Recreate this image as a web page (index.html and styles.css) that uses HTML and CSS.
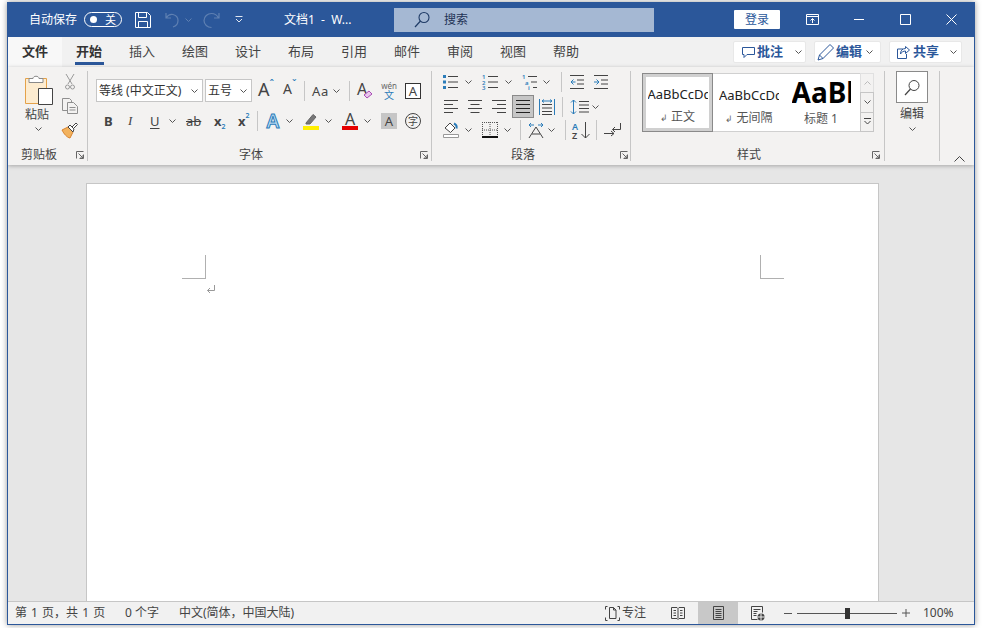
FILE: index.html
```html
<!DOCTYPE html>
<html lang="zh-CN">
<head>
<meta charset="utf-8">
<title>文档1 - Word</title>
<link rel="stylesheet" href="styles.css">
</head>
<body>
<svg class="defs" width="0" height="0">
  <symbol id="chev" viewBox="0 0 7 4"><path d="M.5.5l3 3 3-3" fill="none" stroke="#555" stroke-width="1"/></symbol>
  <symbol id="launch" viewBox="0 0 8 8"><path d="M.5 7.5v-7h7M7.5 3.5v4h-4M2.5 2.5l4.5 4.5M4 7h3V4" fill="none" stroke="#666" stroke-width="1"/></symbol>
</svg>
<div class="window">
  <header class="titlebar">
    <span class="autosave">自动保存</span>
    <span class="toggle ml7"><i class="dot"></i><b class="toggle-t">关</b></span>
    <svg class="ml13" width="16" height="16" viewBox="0 0 16 16"><path d="M.5.5h12l3 3v12H.5zM3.5 .5v5h8v-5M3.5 15.5v-6h9v6" fill="none" stroke="#fff"/></svg>
    <svg class="ml14" width="15" height="16" viewBox="0 0 15 16"><path d="M1 1v5h5M1 6c2-3 5-4 7-3.500 3 .7 5 3 5 6 0 3-2 5.500-5 6.500" fill="none" stroke="#5f80b2" stroke-width="1.200"/></svg>
    <svg class="ml5" width="7" height="4" viewBox="0 0 7 4"><path d="M.5.5l3 3 3-3" fill="none" stroke="#5f80b2"/></svg>
    <svg class="ml11" width="17" height="16" viewBox="0 0 17 16"><path d="M16 1v5h-5M15.500 6C14 3 11.500 1.500 8.500 1.500 4.500 1.500 1 4.500 1 8.500s3.500 7 7.500 7" fill="none" stroke="#5f80b2" stroke-width="1.200"/></svg>
    <svg class="ml15" width="8" height="7" viewBox="0 0 8 7"><path d="M.5.500h7M1 3l3 3 3-3" fill="none" stroke="#dfe6f1"/></svg>
    <span class="doctitle ml41">文档1&nbsp; -&nbsp; W...</span>
    <div class="search ml36">
      <svg width="16" height="17" viewBox="0 0 16 17"><circle cx="10" cy="6.500" r="5" fill="none" stroke="#1f3b66" stroke-width="1.100"/><path d="M6.500 10L1 16" stroke="#1f3b66" stroke-width="1.200"/></svg>
      <span class="search-t">搜索</span>
    </div>
    <button class="login ml80">登录</button>
    <svg class="ml26" width="13" height="11" viewBox="0 0 13 11"><path d="M.5.500h12v10H.5zM.5 2.500h12M6.500 9V4.500M4.500 6.500l2-2 2 2" fill="none" stroke="#fff"/></svg>
    <svg class="ml35" width="10" height="1" viewBox="0 0 10 1"><path d="M0 .5h10" stroke="#fff"/></svg>
    <svg class="ml36" width="11" height="11" viewBox="0 0 11 11"><path d="M.5.500h10v10H.5z" fill="none" stroke="#fff"/></svg>
    <svg class="ml35" width="11" height="11" viewBox="0 0 11 11"><path d="M.5.500l10 10M10.500.5l-10 10" fill="none" stroke="#fff"/></svg>
  </header>

  <nav class="tabbar">
    <span class="file">文件</span>
    <span class="tab tab-on ml14">开始</span>
    <span class="tab ml27">插入</span>
    <span class="tab ml27">绘图</span>
    <span class="tab ml27">设计</span>
    <span class="tab ml27">布局</span>
    <span class="tab ml27">引用</span>
    <span class="tab ml27">邮件</span>
    <span class="tab ml27">审阅</span>
    <span class="tab ml27">视图</span>
    <span class="tab ml27">帮助</span>
    <div class="actions">
      <div class="action w73 pl8">
        <svg width="13" height="12" viewBox="0 0 13 12"><path d="M.5 1.500h12v7H5l-3 3v-3H.5z" fill="none" stroke="#2b579a"/></svg>
        <b class="action-t ml2">批注</b>
        <svg class="ml12" width="7" height="4"><use href="#chev"/></svg>
      </div>
      <div class="action w67 pl2">
        <svg width="18" height="18" viewBox="0 0 18 18"><path d="M1 17l1.500-5L13 1.500l3.500 3.500L6 15.500zM2.500 12L6 15.500" fill="none" stroke="#2b579a"/></svg>
        <b class="action-t ml1">编辑</b>
        <svg class="ml4" width="7" height="4"><use href="#chev"/></svg>
      </div>
      <div class="action w73 pl7">
        <svg width="13" height="13" viewBox="0 0 13 13"><path d="M6 3H.5v9.500h9V8M12.500 4L8.500.5v2C5 2.500 3.500 5 3.500 8c1-2 3-3 5-3v2.500z" fill="none" stroke="#2b579a"/></svg>
        <b class="action-t ml3">共享</b>
        <svg class="ml11" width="7" height="4"><use href="#chev"/></svg>
      </div>
    </div>
  </nav>

  <section class="ribbon">
    <div class="group g-clip">
      <div class="g-body clip-body">
        <div class="paste-col">
          <svg width="28" height="30" viewBox="0 0 28 30"><path d="M.5 3.500h21v25H.5z" fill="#fdecd0" stroke="#e4a24a"/><path d="M4 7.500V3.500h4c0-3 6-3 6 0h4v4z" fill="#fff" stroke="#8a8a8a"/><path d="M13.500 13.500h14v16h-14z" fill="#fff" stroke="#444"/></svg>
          <span class="paste-t">粘贴</span>
          <svg class="paste-ch" width="7" height="4"><use href="#chev"/></svg>
        </div>
        <div class="clip-col">
          <svg width="10" height="16" viewBox="0 0 10 16"><path d="M1 0l6 10M9 0L3 10" fill="none" stroke="#9a9a9a"/><circle cx="2.500" cy="13" r="2" fill="none" stroke="#9a9a9a"/><circle cx="7.500" cy="13" r="2" fill="none" stroke="#9a9a9a"/></svg>
          <svg width="16" height="16" viewBox="0 0 16 16"><path d="M5.500 12.500H.5V.5h7l2 2v2M5.500 4.500h6l4 4v7h-10zM7.500 9.500h6M7.500 12h6" fill="none" stroke="#8f8f8f"/></svg>
          <svg width="17" height="16" viewBox="0 0 17 16"><path d="M1 8l6-3 5 5-3 6c-3-.5-6-4-8-8z" fill="#f2b25e" stroke="#d9822b"/><path d="M7 5l2-2 4 4-1 3zM11 5l4-4 1.500 1.500-4 4" fill="#fff" stroke="#444"/></svg>
        </div>
      </div>
      <div class="g-label">
        <span class="lb ml13 w36">剪贴板</span>
        <svg class="ml19" width="8" height="8"><use href="#launch"/></svg>
      </div>
    </div>

    <div class="group g-font">
      <div class="g-body font-body">
        <div class="row r-font1">
          <div class="select w107"><span class="select-t">等线 (中文正文)</span><svg width="7" height="4"><use href="#chev"/></svg></div>
          <div class="select w47 ml2"><span class="select-t">五号</span><svg width="7" height="4"><use href="#chev"/></svg></div>
          <span class="ico-a a-big ml6">A<sup class="car">ˆ</sup></span>
          <span class="ico-a a-sm ml10">A<sup class="car car-b">ˇ</sup></span>
          <i class="sep ml7"></i>
          <span class="aa ml7">Aa</span>
          <svg class="ml3" width="7" height="4"><use href="#chev"/></svg>
          <i class="sep ml9"></i>
          <svg class="ml7" width="16" height="18" viewBox="0 0 16 18"><text x="0" y="13" class="svgt" font-size="16" fill="#444">A</text><path d="M7 13l5-4 3 3-5 4z" fill="#e7c6ec" stroke="#a94bb5"/></svg>
          <span class="wen ml9"><small class="wen-a">wén</small><span class="wen-b">文</span></span>
          <span class="boxa ml9">A</span>
        </div>
        <div class="row r-font2">
          <b class="fx fx-b ml8">B</b>
          <i class="fx fx-i ml16">I</i>
          <span class="fx fx-u ml16">U</span>
          <svg class="ml10" width="7" height="4"><use href="#chev"/></svg>
          <span class="fx fx-s ml10">ab</span>
          <span class="fx fx-x ml12">x<sub class="blue-s">2</sub></span>
          <span class="fx fx-x ml13">x<sup class="blue-s">2</sup></span>
          <i class="sep ml8"></i>
          <svg class="ml7" width="16" height="17" viewBox="0 0 16 17"><text x="8" y="15" text-anchor="middle" class="svgt svgb" font-size="19" fill="#bfe0f5" stroke="#2b7cb9" stroke-width="1">A</text></svg>
          <svg class="ml5" width="7" height="4"><use href="#chev"/></svg>
          <svg class="ml10" width="16" height="18" viewBox="0 0 16 18"><path d="M3 11L10 2.500l3 2.500-6 7H3z" fill="#777" stroke="#666"/><path d="M0 14h16v4H0z" fill="#ffef00"/></svg>
          <svg class="ml6" width="7" height="4"><use href="#chev"/></svg>
          <svg class="ml10" width="16" height="18" viewBox="0 0 16 18"><text x="8" y="13" text-anchor="middle" class="svgt" font-size="16" fill="#444">A</text><path d="M0 14h16v4H0z" fill="#e60000"/></svg>
          <svg class="ml6" width="7" height="4"><use href="#chev"/></svg>
          <span class="shade ml10">A</span>
          <span class="ringz ml8">字</span>
        </div>
      </div>
      <div class="g-label">
        <span class="lb ml151 w24">字体</span>
        <svg class="ml157" width="8" height="8"><use href="#launch"/></svg>
      </div>
    </div>

    <div class="group g-para">
      <div class="g-body para-body">
        <div class="row r-p1">
          <svg class="ml11" width="15" height="16" viewBox="0 0 15 16"><path d="M0 1h3v3H0zM0 6.500h3v3H0zM0 12h3v3H0z" fill="#2b7cb9"/><path d="M5 2.500h10M5 8h10M5 13.500h10" stroke="#444"/></svg>
          <svg class="ml7" width="7" height="4"><use href="#chev"/></svg>
          <svg class="ml10" width="16" height="16" viewBox="0 0 16 16"><text x="0" y="5" class="svgt svgb" font-size="6" fill="#2b7cb9">1</text><text x="0" y="10.500" class="svgt svgb" font-size="6" fill="#2b7cb9">2</text><text x="0" y="16" class="svgt svgb" font-size="6" fill="#2b7cb9">3</text><path d="M6 2.500h10M6 8h10M6 13.500h10" stroke="#444"/></svg>
          <svg class="ml7" width="7" height="4"><use href="#chev"/></svg>
          <svg class="ml10" width="16" height="16" viewBox="0 0 16 16"><text x="0" y="5" class="svgt svgb" font-size="6" fill="#2b7cb9">1</text><text x="3" y="10.500" class="svgt svgb" font-size="6" fill="#2b7cb9">a</text><text x="6" y="16" class="svgt svgb" font-size="6" fill="#2b7cb9">i</text><path d="M6 2.500h9M9 8h6M11 13.500h4" stroke="#444"/></svg>
          <svg class="ml5" width="7" height="4"><use href="#chev"/></svg>
          <i class="sep ml11"></i>
          <svg class="ml8" width="14" height="14" viewBox="0 0 14 14"><path d="M0 .5h14M7 5h7M7 9h7M0 13.500h14" stroke="#444"/><path d="M5.500 7H1M3.500 4.500L1 7l2.500 2.500" fill="none" stroke="#2b7cb9"/></svg>
          <svg class="ml10" width="14" height="14" viewBox="0 0 14 14"><path d="M0 .5h14M7 5h7M7 9h7M0 13.500h14" stroke="#444"/><path d="M0 7h4.500M2.500 4.500L5 7 2.500 9.500" fill="none" stroke="#2b7cb9"/></svg>
        </div>
        <div class="row r-p2">
          <svg class="ml12" width="14" height="13" viewBox="0 0 14 13"><path d="M0 .5h14M0 4.500h9M0 8.500h14M0 12.500h9" stroke="#444"/></svg>
          <svg class="ml10" width="14" height="13" viewBox="0 0 14 13"><path d="M0 .5h14M2.500 4.500h9M0 8.500h14M2.500 12.500h9" stroke="#444"/></svg>
          <svg class="ml10" width="14" height="13" viewBox="0 0 14 13"><path d="M0 .5h14M5 4.500h9M0 8.500h14M5 12.500h9" stroke="#444"/></svg>
          <span class="just ml6"><svg width="14" height="13" viewBox="0 0 14 13"><path d="M0 .5h14M0 4.500h14M0 8.500h14M0 12.500h14" stroke="#222"/></svg></span>
          <svg class="ml5" width="16" height="16" viewBox="0 0 16 16"><path d="M.5 0v16M15.500 0v16" stroke="#2b7cb9"/><path d="M3 5.500h10M3 9h10M3 12.500h10M3 15.500h10" stroke="#444"/><path d="M3 2h10M5 .5L3 2l2 1.500M11 .5L13 2l-2 1.500" fill="none" stroke="#2b7cb9"/></svg>
          <i class="sep ml7"></i>
          <svg class="ml7" width="19" height="16" viewBox="0 0 19 16"><path d="M3.500 1v14M1 3.500L3.500 1 6 3.500M1 12.500L3.500 15 6 12.500" fill="none" stroke="#2b7cb9"/><path d="M9 2.500h10M9 6h10M9 9.500h10M9 13h10" stroke="#444"/></svg>
          <svg class="ml3" width="7" height="4"><use href="#chev"/></svg>
        </div>
        <div class="row r-p3">
          <svg class="ml11" width="16" height="16" viewBox="0 0 16 16"><path d="M2 6l5-5 5 5-4.500 4.500z" fill="#fff" stroke="#444"/><path d="M11 1.500c2 1 3 3 2.500 5" fill="none" stroke="#2b7cb9" stroke-width="2"/><path d="M.5 12.500h15v3H.5z" fill="#fff" stroke="#999"/></svg>
          <svg class="ml6" width="7" height="4"><use href="#chev"/></svg>
          <svg class="ml10" width="16" height="16" viewBox="0 0 16 16"><path d="M.5 0v15M15.500 0v15M0 .5h16M8 0v15M0 8h16" stroke="#555" stroke-dasharray="1 1" fill="none"/><path d="M0 15h16" stroke="#111" stroke-width="2"/></svg>
          <svg class="ml6" width="7" height="4"><use href="#chev"/></svg>
          <i class="sep ml9"></i>
          <svg class="ml7" width="16" height="16" viewBox="0 0 16 16"><path d="M1 3h5M3 1L1 3l2 2M10 3h5M13 1l2 2-2 2" fill="none" stroke="#2b7cb9"/><path d="M1 16L8 5l7 11M4 12h8" fill="none" stroke="#444"/></svg>
          <svg class="ml4" width="7" height="4"><use href="#chev"/></svg>
          <i class="sep ml10"></i>
          <svg class="ml6" width="18" height="17" viewBox="0 0 18 17"><text x="0" y="7.500" class="svgt svgb" font-size="9" fill="#2b7cb9">A</text><text x="0" y="16.500" class="svgt svgb" font-size="9" fill="#444">Z</text><path d="M13.500 0v16M9.500 12l4 4 4-4" fill="none" stroke="#444"/></svg>
          <i class="sep ml6"></i>
          <svg class="ml7" width="17" height="14" viewBox="0 0 17 14"><path d="M16.500 0v6.500h-8M11 4L8.500 6.500 11 9" fill="none" stroke="#444"/><path d="M0 10.500h10M7 8l3 2.500L7 13" fill="none" stroke="#444"/></svg>
        </div>
      </div>
      <div class="g-label">
        <span class="lb ml79 w24">段落</span>
        <svg class="ml85" width="8" height="8"><use href="#launch"/></svg>
      </div>
    </div>

    <div class="group g-style">
      <div class="g-body style-body">
        <div class="gallery">
          <div class="st st-on"><span class="st-a">AaBbCcDdEe</span><span class="st-n"><i class="ret">↲</i> 正文</span></div>
          <div class="st"><span class="st-a">AaBbCcDdEe</span><span class="st-n"><i class="ret">↲</i> 无间隔</span></div>
          <div class="st"><span class="st-h">AaBbC</span><span class="st-n">标题 1</span></div>
        </div>
        <div class="scroll">
          <span class="sc sc-off"><svg width="7" height="4" viewBox="0 0 7 4"><path d="M.5 3.500l3-3 3 3" fill="none" stroke="#bbb"/></svg></span>
          <span class="sc"><svg width="7" height="4"><use href="#chev"/></svg></span>
          <span class="sc"><svg width="7" height="7" viewBox="0 0 7 7"><path d="M0 .5h7M.5 3l3 3 3-3" fill="none" stroke="#444"/></svg></span>
        </div>
      </div>
      <div class="g-label">
        <span class="lb ml106 w24">样式</span>
        <svg class="ml111" width="8" height="8"><use href="#launch"/></svg>
      </div>
    </div>

    <div class="group g-edit">
      <div class="edit-col">
        <span class="find"><svg width="16" height="17" viewBox="0 0 16 17"><circle cx="10" cy="6.500" r="5" fill="none" stroke="#444"/><path d="M6.500 10L1 16" stroke="#444" stroke-width="1.200"/></svg></span>
        <span class="edit-t">编辑</span>
        <svg class="edit-ch" width="7" height="4"><use href="#chev"/></svg>
      </div>
    </div>
    <div class="collapse"><svg width="11" height="6" viewBox="0 0 11 6"><path d="M.5 5.500l5-5 5 5" fill="none" stroke="#444"/></svg></div>
  </section>

  <main class="docarea">
    <article class="page">
      <div class="crops"><i class="crop crop-l"></i><i class="crop crop-r"></i></div>
      <div class="para-mark"><svg width="9" height="9" viewBox="0 0 9 9"><path d="M8.500 0v5.500H1.500M4 3L1.500 5.500 4 8" fill="none" stroke="#999"/></svg></div>
    </article>
  </main>

  <footer class="status">
    <span class="s-page">第 1 页，共 1 页</span>
    <span class="s-words">0 个字</span>
    <span class="s-lang">中文(简体，中国大陆)</span>
    <svg class="s-focus" width="15" height="15" viewBox="0 0 15 15"><path d="M.5 3.500v-3h2M.5 11.500v3h2M14.500 3.500v-3h-2M14.500 11.500v3h-2M4.500 12.500v-11h4l2.500 2.500v8.500zM8.500 1.500V4H11" fill="none" stroke="#444"/></svg>
    <span class="s-ft">专注</span>
    <svg class="ml25" width="14" height="14" viewBox="0 0 14 14"><path d="M.5 1.500h5.500l1 1 1-1h5.500v11H8l-1 1-1-1H.500zM7 2.500v10M2.500 4.500h2.500M2.500 7h2.500M2.500 9.500h2.500M9 4.500h2.500M9 7h2.500M9 9.500h2.500" fill="none" stroke="#444"/></svg>
    <span class="s-print ml13"><svg width="11" height="14" viewBox="0 0 11 14"><path d="M.5.500h10v13H.5zM2.500 3.500h6M2.500 5.500h6M2.500 7.500h6M2.500 9.500h6M2.500 11.500h6" fill="none" stroke="#444"/></svg></span>
    <svg class="ml13" width="14" height="15" viewBox="0 0 14 15"><path d="M6.500 13.500H.5V.5h11v6M2.500 3.500h7M2.500 5.500h4M2.500 7.500h3M2.500 9.500h3" fill="none" stroke="#444"/><circle cx="10" cy="11" r="3.500" fill="#444"/><path d="M6.500 11h7M10 7.500v7" stroke="#eee"/></svg>
    <svg class="ml19" width="8" height="1" viewBox="0 0 8 1"><path d="M0 .5h8" stroke="#555"/></svg>
    <span class="slider ml5"><i class="thumb"></i></span>
    <svg class="ml5" width="8" height="8" viewBox="0 0 8 8"><path d="M0 4h8M4 0v8" stroke="#555"/></svg>
    <span class="s-zoom ml13">100%</span>
  </footer>
</div>
</body>
</html>
```
FILE: styles.css
```css
* { box-sizing: border-box; }
html, body { margin: 0; height: 100%; overflow: hidden; }
body {
  background: #fff;
  font-family: "Noto Sans", "Noto Sans CJK SC", sans-serif;
  font-size: 12px;
  color: #444;
}
.defs { position: absolute; }
svg { display: block; flex: none; overflow: visible; }
i { font-style: normal; }
.svgt { font-family: "Noto Sans", sans-serif; }
.svgb { font-weight: 600; }

.ml1 { margin-left: 1px; } .ml2 { margin-left: 2px; } .ml3 { margin-left: 3px; } .ml4 { margin-left: 4px; } .ml5 { margin-left: 5px; }
.ml6 { margin-left: 6px; } .ml7 { margin-left: 7px; } .ml8 { margin-left: 8px; } .ml9 { margin-left: 9px; }
.ml10 { margin-left: 10px; } .ml11 { margin-left: 11px; } .ml12 { margin-left: 12px; } .ml13 { margin-left: 13px; }
.ml14 { margin-left: 14px; } .ml15 { margin-left: 15px; } .ml16 { margin-left: 16px; } .ml19 { margin-left: 19px; }
.ml25 { margin-left: 25px; } .ml26 { margin-left: 26px; } .ml27 { margin-left: 27px; }
.ml35 { margin-left: 35px; } .ml36 { margin-left: 36px; } .ml41 { margin-left: 41px; } .ml79 { margin-left: 79px; }
.ml80 { margin-left: 80px; } .ml85 { margin-left: 85px; } .ml106 { margin-left: 106px; } .ml111 { margin-left: 111px; }
.ml151 { margin-left: 151px; } .ml157 { margin-left: 157px; }
.w24 { width: 24px; } .w36 { width: 36px; } .w47 { width: 47px; } .w67 { width: 67px; } .w73 { width: 73px; } .w107 { width: 107px; }
.pl2 { padding-left: 2px; } .pl7 { padding-left: 7px; } .pl8 { padding-left: 8px; }

.window {
  width: 968px;
  height: 623px;
  margin: 2px 0 0 7px;
  display: flex;
  flex-direction: column;
  border: 1px solid #2b579a;
  border-top: 0;
  box-shadow: 0 0 6px rgba(0, 0, 0, .4);
  overflow: hidden;
}

/* title bar */
.titlebar {
  height: 35px;
  flex: none;
  display: flex;
  align-items: center;
  padding-left: 21px;
  background: #2b579a;
  color: #fff;
}
.autosave { width: 48px; line-height: 16px; white-space: nowrap; }
.toggle {
  width: 38px;
  height: 15px;
  flex: none;
  display: flex;
  align-items: center;
  border: 1px solid #fff;
  border-radius: 8px;
  padding-left: 5px;
}
.dot { width: 7px; height: 7px; border-radius: 50%; background: #fff; flex: none; }
.toggle-t { font-weight: 400; font-size: 11px; line-height: 13px; margin-left: 8px; }
.doctitle { width: 74px; white-space: nowrap; line-height: 16px; }
.search {
  width: 260px;
  height: 24px;
  flex: none;
  display: flex;
  align-items: center;
  padding-left: 20px;
  background: #a5b8d3;
}
.search-t { margin-left: 14px; color: #1f3355; line-height: 16px; }
.login {
  width: 46px;
  height: 19px;
  flex: none;
  border: 0;
  padding: 0;
  background: #fff;
  color: #2b579a;
  font: inherit;
  line-height: 19px;
  border-radius: 1px;
}

/* tab bar */
.tabbar {
  height: 30px;
  flex: none;
  display: flex;
  align-items: flex-start;
  background: #f1f1f1;
  font-size: 13px;
}
.file {
  width: 54px;
  height: 30px;
  flex: none;
  padding-left: 14px;
  line-height: 28px;
  font-weight: 700;
  color: #333;
  background: #f8f8f8;
}
.tab { width: 26px; flex: none; line-height: 28px; white-space: nowrap; color: #444; position: relative; }
.tab-on { font-weight: 700; color: #333; }
.tab-on::after {
  content: "";
  position: absolute;
  left: -1px;
  right: -2px;
  top: 25px;
  height: 3px;
  background: #2b579a;
}
.actions { margin: 4px 12px 0 auto; display: flex; gap: 8px; }
.action {
  height: 22px;
  display: flex;
  align-items: center;
  background: #fff;
  border: 1px solid #e8e8e8;
  border-radius: 2px;
}
.action-t { color: #2b579a; font-weight: 700; line-height: 18px; margin-bottom: 2px; }

/* ribbon */
.ribbon {
  height: 98px;
  flex: none;
  display: flex;
  background: #f3f2f1;
  position: relative;
  box-shadow: 0 1px 4px rgba(0, 0, 0, .28);
  align-items: flex-start;
}
.group {
  margin-top: 4px;
  height: 90px;
  flex: none;
  border-right: 1px solid #c6c6c6;
  display: flex;
  flex-direction: column;
}
.g-clip { width: 80px; }
.g-font { width: 344px; }
.g-para { width: 199px; }
.g-style { width: 254px; }
.g-edit { width: 55px; }
.g-body { height: 77px; flex: none; }
.g-label { height: 13px; display: flex; align-items: center; flex: none; }
.lb { flex: none; line-height: 13px; white-space: nowrap; color: #444; }
.row { display: flex; align-items: center; }
.sep { width: 1px; height: 20px; background: #c6c6c6; flex: none; }

.clip-body { display: flex; padding-left: 17px; }
.paste-col { width: 28px; padding-top: 4px; flex: none; display: flex; flex-direction: column; }
.paste-t { line-height: 16px; margin-top: 2px; white-space: nowrap; }
.paste-ch { margin: 4px 0 0 10px; }
.clip-col { width: 17px; margin-left: 8px; padding-top: 3px; display: flex; flex-direction: column; align-items: center; gap: 8px; flex: none; }

.font-body { padding: 8px 0 0 8px; }
.r-font1 { height: 23px; }
.r-font2 { height: 20px; margin-top: 9px; }
.select {
  height: 23px;
  flex: none;
  display: flex;
  align-items: center;
  justify-content: space-between;
  padding: 0 4px 0 2px;
  background: #fff;
  border: 1px solid #c6c6c6;
}
.select-t { line-height: 16px; white-space: nowrap; color: #333; }
.ico-a { flex: none; display: flex; color: #444; line-height: 20px; margin-bottom: 4px; }
.a-big { font-size: 18px; width: 15px; }
.a-sm { font-size: 14px; width: 14px; }
.car { font-size: 11px; line-height: 10px; color: #2b7cb9; margin-left: 0; }
.car-b { color: #2b7cb9; }
.aa { width: 18px; font-size: 13px; line-height: 18px; flex: none; letter-spacing: .6px; }
.wen { width: 14px; flex: none; display: flex; flex-direction: column; align-items: center; }
.wen-a { font-size: 8px; line-height: 8px; color: #666; }
.wen-b { font-size: 10px; line-height: 10px; color: #2b7cb9; }
.boxa {
  width: 16px;
  height: 16px;
  flex: none;
  border: 1px solid #333;
  text-align: center;
  font-size: 13px;
  line-height: 14px;
  background: #fff;
}
.fx { flex: none; line-height: 18px; color: #444; font-size: 13px; }
.fx-b { width: 8px; font-weight: 700; }
.fx-i { width: 6px; font-family: "Liberation Serif", serif; font-style: italic; }
.fx-u { width: 9px; text-decoration: underline; text-underline-offset: 2px; }
.fx-s { width: 16px; text-decoration: line-through; }
.fx-x { width: 11px; font-weight: 700; display: flex; }
.blue-s { font-size: 7px; line-height: 8px; color: #2b7cb9; font-weight: 600; }
sub.blue-s { margin-top: 11px; }
sup.blue-s { margin-top: 0; }
.shade {
  width: 16px;
  height: 16px;
  flex: none;
  background: #c6c6c6;
  text-align: center;
  font-size: 13px;
  line-height: 16px;
}
.ringz {
  width: 16px;
  height: 16px;
  flex: none;
  border: 1px solid #444;
  border-radius: 50%;
  text-align: center;
  font-size: 10px;
  line-height: 14px;
}

.para-body { padding-top: 3px; }
.r-p1 { height: 16px; }
.r-p2 { height: 23px; margin-top: 5px; }
.r-p3 { height: 16px; margin-top: 4px; }
.just {
  width: 22px;
  height: 23px;
  flex: none;
  display: flex;
  align-items: center;
  justify-content: center;
  background: #c6c6c6;
  border: 1px solid #8a8a8a;
}

.style-body { display: flex; padding: 2px 0 0 11px; }
.gallery {
  width: 218px;
  height: 59px;
  flex: none;
  display: flex;
  background: #fff;
  border: 1px solid #d0d0d0;
  border-right: 0;
}
.st { width: 72px; flex: none; display: flex; flex-direction: column; align-items: center; overflow: hidden; padding-top: 12px; }
.st-on {
  width: 71px;
  margin: -1px 0 -1px -1px;
  padding-top: 11px;
  border: 1px solid #8a8a8a;
  box-shadow: inset 0 0 0 3px #d0d0d0;
}
.st-a { width: 60px; overflow: hidden; white-space: nowrap; line-height: 18px; color: #222; font-size: 13px; }
.st-h { width: 59px; overflow: hidden; white-space: nowrap; font-size: 28px; line-height: 30px; font-weight: 700; color: #000; margin-top: -9px; }
.st-n { line-height: 16px; color: #555; margin-top: 6px; white-space: nowrap; }
.st .st-h + .st-n { margin-top: 4px; }
.ret { font-size: 9px; color: #666; }
.scroll { width: 14px; height: 59px; flex: none; display: flex; flex-direction: column; }
.sc {
  flex: 1;
  display: flex;
  align-items: center;
  justify-content: center;
  background: #f3f2f1;
  border: 1px solid #c6c6c6;
  border-bottom: 0;
}
.sc:last-child { border-bottom: 1px solid #c6c6c6; }
.sc-off { border-color: #e0e0e0 #e0e0e0 #c6c6c6; }

.edit-col { width: 32px; margin-left: 11px; display: flex; flex-direction: column; align-items: center; }
.find {
  width: 32px;
  height: 32px;
  flex: none;
  display: flex;
  align-items: center;
  justify-content: center;
  background: #fff;
  border: 1px solid #8a8a8a;
}
.edit-t { line-height: 16px; margin-top: 3px; }
.edit-ch { margin-top: 5px; }
.collapse { flex: 1; height: 98px; display: flex; align-items: flex-end; justify-content: flex-end; padding: 0 9px 3px 0; }

/* document */
.docarea { flex: 1; min-height: 0; background: #e6e6e6; padding: 18px 0 0 78px; overflow: hidden; }
.page {
  width: 793px;
  height: 100%;
  background: #fff;
  border: 1px solid #c6c6c6;
  border-bottom: 0;
  padding: 71px 94px 0 95px;
}
.crops { display: flex; justify-content: space-between; }
.crop { width: 24px; height: 24px; border-bottom: 1px solid #b0b0b0; flex: none; }
.crop-l { border-right: 1px solid #b0b0b0; }
.crop-r { border-left: 1px solid #b0b0b0; }
.para-mark { margin: 6px 0 0 24px; }

/* status bar */
.status {
  height: 23px;
  flex: none;
  display: flex;
  align-items: center;
  background: #f1f1f1;
  border-top: 1px solid #c6c6c6;
  color: #444;
  white-space: nowrap;
}
.status span { flex: none; line-height: 16px; }
.s-page { width: 90px; margin-left: 7px; word-spacing: 1px; }
.s-words { width: 35px; margin-left: 20px; }
.s-lang { width: 116px; margin-left: 19px; }
.s-focus { margin-left: 310px; }
.s-ft { width: 24px; margin-left: 2px; }
.status .s-print {
  width: 40px;
  height: 22px;
  display: flex;
  align-items: center;
  justify-content: center;
  background: #c8c8c8;
}
.slider {
  width: 100px;
  height: 1px;
  background: #555;
  display: flex;
  align-items: center;
  padding-left: 48px;
}
.status .slider { line-height: 1px; }
.thumb { width: 5px; height: 11px; background: #333; flex: none; }
.s-zoom { width: 32px; }
```
